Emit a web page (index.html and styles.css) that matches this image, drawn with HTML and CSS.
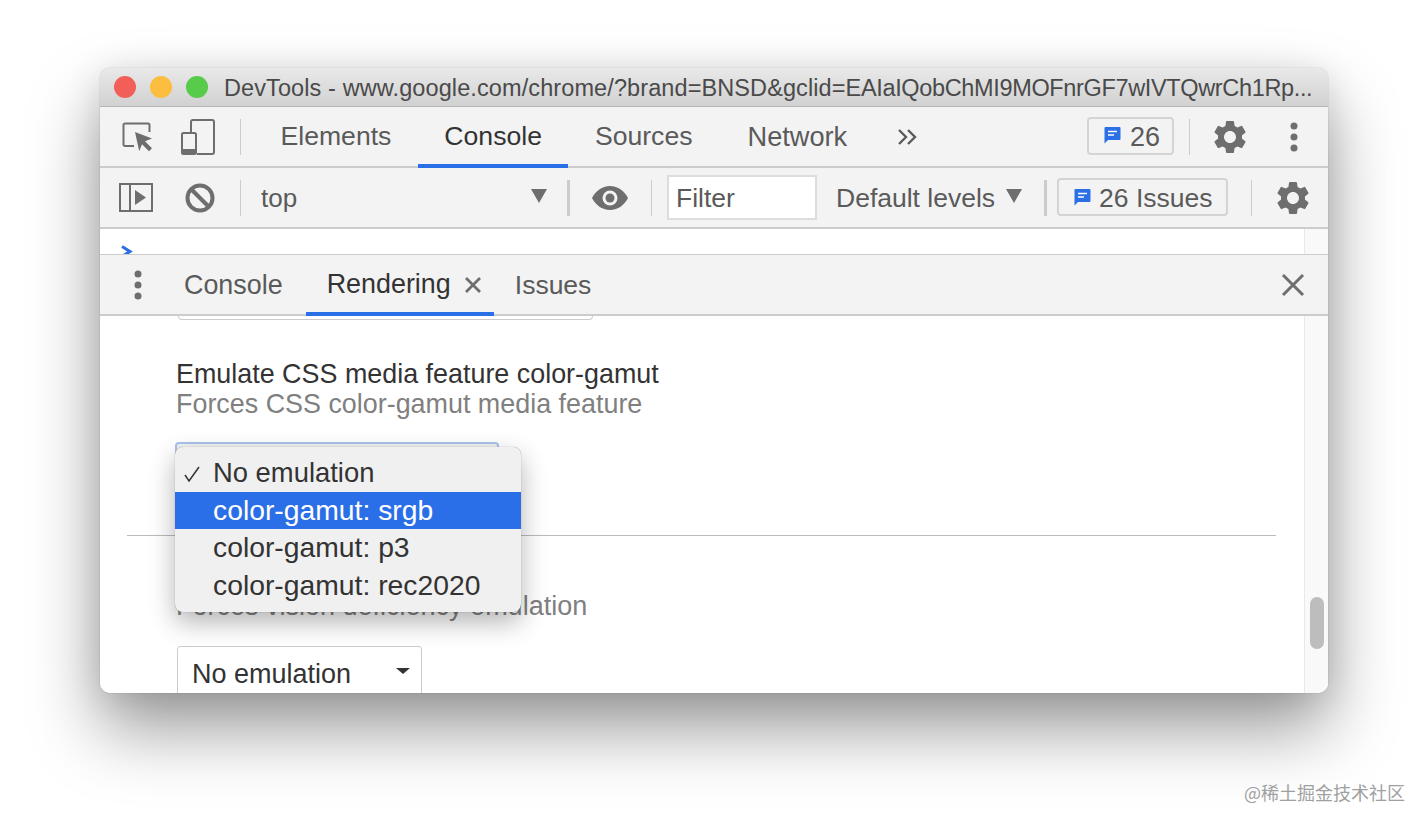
FILE: index.html
```html
<!DOCTYPE html>
<html lang="en">
<head>
    <meta charset="UTF-8">
    <title>DevTools</title>
    <link rel="stylesheet" href="styles.css">
</head>
<body>
    <div class="window">
        <div class="titlebar">
            <span class="light red"></span>
            <span class="light yellow"></span>
            <span class="light green"></span>
            <span class="title">DevTools - www.google.com/chrome/?brand=BNSD&amp;gclid=<span class="title-tail">EAIaIQobChMI9MOFnrGF7wIVTQwrCh1Rp...</span></span>
        </div>

        <div class="toolbar main-tabs">
            <svg class="icon inspect" width="32" height="32" viewBox="0 0 32 32">
                <path d="M12 25H3a1.500 1.500 0 0 1-1.500-1.500V4A1.500 1.500 0 0 1 3 2.500h23A1.500 1.500 0 0 1 27.500 4v7" fill="none" stroke="#6e6e6e" stroke-width="2"/>
                <path d="M13 11l17 6.500-7 2.800 7 7-3 3-7-7-2.800 7z" fill="#6e6e6e"/>
            </svg>
            <svg class="icon device" width="34" height="36" viewBox="0 0 34 36">
                <path d="M10 15V3a2 2 0 0 1 2-2h19a2 2 0 0 1 2 2v30a2 2 0 0 1-2 2H16" fill="none" stroke="#6e6e6e" stroke-width="2"/>
                <rect x="1" y="14" width="14" height="21" rx="1.500" fill="none" stroke="#6e6e6e" stroke-width="2"/>
                <rect x="1" y="30" width="14" height="5" fill="#6e6e6e"/>
            </svg>
            <span class="sep first-sep"></span>
            <a class="tab first-tab">Elements</a>
            <a class="tab active">Console</a>
            <a class="tab">Sources</a>
            <a class="tab network-tab">Network</a>
            <svg class="icon more-tabs" width="22" height="18" viewBox="0 0 22 18">
                <path d="M2 2l7 7-7 7M11 2l7 7-7 7" fill="none" stroke="#5a5a5a" stroke-width="2.400"/>
            </svg>
            <span class="spacer"></span>
            <button class="issues-btn small">
                <svg width="18" height="18" viewBox="0 0 18 18"><path d="M2.500 1h14a1 1 0 0 1 1 1v11a1 1 0 0 1-1 1H5l-3.500 3.500V2a1 1 0 0 1 1-1z" fill="#2a6fe5"/><path d="M5 5.500h9M5 9h6" stroke="#fff" stroke-width="1.600"/></svg>
                26
            </button>
            <span class="sep top-sep"></span>
            <svg class="icon gear-a" width="40" height="40" viewBox="0 0 24 24"><use href="#gear"/></svg>
            <svg class="icon dots-right" width="8" height="32" viewBox="0 0 8 32"><circle cx="4" cy="5" r="3.500"/><circle cx="4" cy="16" r="3.500"/><circle cx="4" cy="27" r="3.500"/></svg>
        </div>

        <div class="toolbar console-bar">
            <svg class="icon dock" width="34" height="30" viewBox="0 0 34 30">
                <rect x="1" y="1" width="32" height="27" fill="none" stroke="#6e6e6e" stroke-width="2"/>
                <path d="M11 1v27" stroke="#6e6e6e" stroke-width="2"/>
                <path d="M16 7l11 7.500-11 7.500z" fill="#6e6e6e"/>
            </svg>
            <svg class="icon clear" width="30" height="30" viewBox="0 0 30 30">
                <circle cx="15" cy="15" r="12.500" fill="none" stroke="#6e6e6e" stroke-width="4"/>
                <path d="M6 6l18 18" stroke="#6e6e6e" stroke-width="4"/>
            </svg>
            <span class="sep clear-sep"></span>
            <span class="context">top</span>
            <span class="arrow context-arrow"></span>
            <span class="sep thick context-sep"></span>
            <svg class="icon eye" width="36" height="24" viewBox="0 0 36 24">
                <path d="M18 0C10 0 3.500 5 0 12c3.500 7 10 12 18 12s14.500-5 18-12C32.500 5 26 0 18 0z" fill="#6e6e6e"/>
                <circle cx="18" cy="12" r="7.500" fill="#f3f3f3"/>
                <circle cx="18" cy="12" r="4.500" fill="#6e6e6e"/>
            </svg>
            <span class="sep eye-sep"></span>
            <div class="filter">Filter</div>
            <span class="levels">Default levels</span>
            <span class="arrow levels-arrow"></span>
            <span class="sep thick levels-sep"></span>
            <button class="issues-btn wide">
                <svg width="18" height="18" viewBox="0 0 18 18"><path d="M2.500 1h14a1 1 0 0 1 1 1v11a1 1 0 0 1-1 1H5l-3.500 3.500V2a1 1 0 0 1 1-1z" fill="#2a6fe5"/><path d="M5 5.500h9M5 9h6" stroke="#fff" stroke-width="1.600"/></svg>
                26 Issues
            </button>
            <span class="sep wide-sep"></span>
            <svg class="icon gear-b" width="40" height="40" viewBox="0 0 24 24"><use href="#gear"/></svg>
        </div>

        <div class="console-area">
            <div class="prompt">
                <svg width="12" height="12" viewBox="0 0 12 12"><path d="M1 1.500l8 5-8 5" fill="none" stroke="#2a6fe5" stroke-width="3"/></svg>
            </div>
            <div class="track"></div>
        </div>

        <div class="toolbar drawer-tabs">
            <svg class="icon dots-left" width="8" height="32" viewBox="0 0 8 32"><circle cx="4" cy="5" r="3.500"/><circle cx="4" cy="16" r="3.500"/><circle cx="4" cy="27" r="3.500"/></svg>
            <a class="dtab console-dtab">Console</a>
            <a class="dtab active">Rendering
                <svg width="18" height="18" viewBox="0 0 18 18"><path d="M2 2l14 14M16 2L2 16" stroke="#6e6e6e" stroke-width="2.800"/></svg>
            </a>
            <a class="dtab issues-dtab">Issues</a>
            <span class="spacer"></span>
            <svg class="icon close-drawer" width="24" height="24" viewBox="0 0 24 24"><path d="M2 2l20 20M22 2L2 22" stroke="#6e6e6e" stroke-width="3"/></svg>
        </div>

        <div class="panel">
            <div class="panel-body">
                <div class="cut-select"></div>
                <h3 class="feature">Emulate CSS media feature color-gamut</h3>
                <p class="hint">Forces CSS color-gamut media feature</p>
                <div class="focus-select"></div>
                <hr class="divider">
                <p class="hint second-hint">Forces vision deficiency emulation</p>
                <div class="plain-select">No emulation<span class="small-arrow"></span></div>
            </div>
            <div class="track"><span class="thumb"></span></div>

            <ul class="popup">
                <li class="checked">
                    <svg width="16" height="16" viewBox="0 0 16 16"><path d="M1 9l4 6 10-14" fill="none" stroke="#333" stroke-width="1.500"/></svg>
                    No emulation
                </li>
                <li class="selected">color-gamut: srgb</li>
                <li>color-gamut: p3</li>
                <li>color-gamut: rec2020</li>
            </ul>
        </div>
    </div>

    <div class="watermark">@稀土掘金技术社区</div>

    <svg width="0" height="0" class="defs">
        <symbol id="gear" viewBox="0 0 24 24">
            <path fill="#6e6e6e" d="M19.140 12.940c.04-.3.06-.61.06-.94 0-.32-.02-.64-.07-.94l2.030-1.580c.18-.14.23-.41.12-.61l-1.920-3.320c-.12-.22-.37-.29-.59-.22l-2.390.96c-.5-.38-1.030-.7-1.620-.94l-.36-2.540c-.04-.24-.24-.41-.48-.41h-3.840c-.24 0-.43.17-.47.41l-.36 2.540c-.59.24-1.130.57-1.620.94l-2.390-.96c-.22-.08-.47 0-.59.22L2.740 8.870c-.12.21-.08.47.12.61l2.030 1.580c-.05.3-.09.63-.09.94s.02.64.07.94l-2.030 1.580c-.18.14-.23.41-.12.61l1.920 3.320c.12.22.37.29.59.22l2.390-.96c.5.38 1.030.7 1.620.94l.36 2.540c.05.24.24.41.48.41h3.840c.24 0 .44-.17.47-.41l.36-2.540c.59-.24 1.130-.56 1.620-.94l2.390.96c.22.08.47 0 .59-.22l1.920-3.320c.12-.22.07-.47-.12-.61l-2.010-1.580zM12 15.600c-1.980 0-3.600-1.620-3.600-3.600s1.620-3.600 3.600-3.600 3.600 1.620 3.600 3.600-1.620 3.600-3.600 3.600z"/>
        </symbol>
    </svg>
</body>
</html>
```

FILE: styles.css
```css
* {
    margin: 0;
    padding: 0;
    box-sizing: border-box;
}
html, body {
    height: 826px;
    overflow: hidden;
}
body {
    font-family: "Liberation Sans", Arial, sans-serif;
    background-color: #fff;
    color: #5a5a5a;
    position: relative;
}
.defs {
    position: absolute;
}
.window {
    width: 1228px;
    height: 625px;
    margin: 68px 0 0 100px;
    border-radius: 10px;
    overflow: hidden;
    background-color: #fff;
    display: flex;
    flex-direction: column;
    box-shadow: 0 0 1px rgba(0, 0, 0, 0.45), 0 36px 70px rgba(0, 0, 0, 0.4), 0 4px 34px rgba(0, 0, 0, 0.1);
}
.titlebar {
    height: 39px;
    flex: none;
    display: flex;
    align-items: center;
    padding-left: 14px;
    background: linear-gradient(#e9e9e9, #d1d1d1);
    border-bottom: 1px solid #b5b5b5;
}
.light {
    width: 22px;
    height: 22px;
    border-radius: 50%;
    margin-right: 14px;
    flex: none;
}
.light.red { background-color: #f25f58; }
.light.yellow { background-color: #fbbe3f; }
.light.green { background-color: #58cb4b; }
.title {
    font-size: 23.500px;
    letter-spacing: 0.1px;
    color: #4a4a4a;
    margin-left: 2px;
    padding-top: 3px;
    white-space: nowrap;
}
.title-tail {
    letter-spacing: -0.35px;
}
.toolbar {
    flex: none;
    display: flex;
    align-items: center;
    background-color: #f3f3f3;
    border-bottom: 2px solid #ccc;
}
.main-tabs {
    height: 61px;
}
.console-bar {
    height: 61px;
}
.drawer-tabs {
    height: 62px;
    border-top: 1px solid #ccc;
}
.icon {
    flex: none;
    fill: #6e6e6e;
}
.spacer {
    flex: 1;
}
.sep {
    width: 1px;
    height: 36px;
    background-color: #ccc;
    flex: none;
}
.sep.thick {
    width: 3px;
}
.inspect { margin-left: 22px; }
.device { margin-left: 27px; }
.first-sep { margin-left: 25px; }
.tab {
    align-self: stretch;
    padding: 2px 26.500px 0;
    display: flex;
    align-items: center;
    font-size: 26.600px;
    border-bottom: 4px solid transparent;
    margin-bottom: -2px;
}
.first-tab { margin-left: 13px; }
.tab.active {
    color: #333;
    border-bottom-color: #2a6fe5;
}
.network-tab {
    margin-left: 2px;
    font-size: 27.200px;
}
.more-tabs { margin-left: 23px; }
.issues-btn {
    display: flex;
    align-items: center;
    gap: 8px;
    font-family: inherit;
    font-size: 26.500px;
    color: #5a5a5a;
    background-color: #f3f3f3;
    border: 2px solid #d4d4d4;
    border-radius: 4px;
    margin-bottom: 2px;
    flex: none;
}
.issues-btn.small {
    width: 87px;
    height: 38px;
    padding: 3px 0 0 14px;
    gap: 9px;
    font-size: 27px;
}
.issues-btn.wide {
    width: 171px;
    height: 38px;
    margin-left: 10px;
    padding: 4px 0 0 14px;
}
.issues-btn svg {
    margin-bottom: 4px;
}
.top-sep { margin-left: 15px; }
.gear-a { margin-left: 20px; }
.dots-right {
    margin-left: 40px;
    margin-right: 30px;
}
.dock { margin-left: 19px; }
.clear { margin-left: 32px; }
.clear-sep { margin-left: 25px; }
.context {
    font-size: 26px;
    margin-left: 20px;
    padding-top: 2px;
    width: 270px;
}
.arrow {
    width: 0;
    height: 0;
    border-left: 8px solid transparent;
    border-right: 8px solid transparent;
    border-top: 14px solid #6e6e6e;
    flex: none;
    margin-bottom: 4px;
}
.context-sep { margin-left: 20px; }
.eye { margin-left: 22px; }
.eye-sep { margin-left: 23px; }
.filter {
    width: 150px;
    height: 45px;
    margin-left: 15px;
    padding: 2px 0 0 7px;
    display: flex;
    align-items: center;
    font-size: 26.500px;
    background-color: #fff;
    border: 2px solid #ddd;
}
.levels {
    font-size: 26.500px;
    margin-left: 19px;
    padding-top: 2px;
}
.levels-arrow { margin-left: 11px; }
.levels-sep { margin-left: 22px; }
.wide-sep { margin-left: 23px; }
.gear-b { margin-left: 21px; }
.console-area {
    height: 25px;
    flex: none;
    display: flex;
    background-color: #fff;
    overflow: hidden;
}
.prompt {
    flex: 1;
    padding: 14px 0 0 21px;
}
.track {
    width: 24px;
    flex: none;
    background-color: #f9f9f9;
    border-left: 1px solid #e8e8e8;
    position: relative;
}
.dots-left { margin-left: 34px; }
.dtab {
    align-self: stretch;
    display: flex;
    align-items: center;
    padding-top: 2px;
    font-size: 26.900px;
}
.console-dtab { margin-left: 42px; }
.dtab.active {
    color: #333;
    margin-left: 23px;
    padding: 2px 12px 0 21px;
    gap: 13px;
    border-bottom: 4px solid #2a6fe5;
    margin-bottom: -2px;
}
.issues-dtab {
    margin-left: 21px;
    font-size: 26.500px;
}
.close-drawer { margin-right: 23px; }
.panel {
    flex: 1;
    display: flex;
    position: relative;
    overflow: hidden;
    background-color: #fff;
}
.panel-body {
    flex: 1;
    padding: 0 28px 0 27px;
    overflow: hidden;
}
.cut-select {
    width: 415px;
    height: 4px;
    margin-left: 51px;
    border: 1px solid #ccc;
    border-top: none;
    border-radius: 0 0 4px 4px;
}
.feature {
    font-size: 26.900px;
    font-weight: normal;
    line-height: 30px;
    color: #333;
    margin: 39px 0 0 49px;
}
.hint {
    font-size: 26.900px;
    line-height: 30px;
    color: #808080;
    margin-left: 49px;
}
.second-hint {
    margin-top: 55px;
    font-size: 27px;
}
.focus-select {
    width: 324px;
    height: 56px;
    margin: 23px 0 37px 48px;
    background-color: #f3f3f3;
    border: 2px solid #a8c3ec;
    border-radius: 4px;
}
.divider {
    border: none;
    height: 1px;
    background-color: #bbb;
}
.plain-select {
    width: 245px;
    height: 60px;
    margin: 25px 0 0 50px;
    padding: 12px 0 0 14px;
    font-size: 27px;
    color: #333;
    border: 1px solid #ccc;
    border-radius: 3px;
    display: flex;
    justify-content: space-between;
}
.small-arrow {
    width: 0;
    height: 0;
    margin: 9px 11px 0 0;
    border-left: 7px solid transparent;
    border-right: 7px solid transparent;
    border-top: 6px solid #333;
}
.thumb {
    position: absolute;
    left: 5px;
    top: 281px;
    width: 14px;
    height: 52px;
    border-radius: 7px;
    background-color: #bdbdbd;
}
.popup {
    position: absolute;
    left: 75px;
    top: 131px;
    width: 346px;
    height: 165px;
    padding-top: 7px;
    list-style: none;
    font-size: 28.300px;
    color: #333;
    background-color: #f0f0f0;
    border-radius: 8px;
    box-shadow: 0 0 1px rgba(0, 0, 0, 0.45), 0 10px 26px rgba(0, 0, 0, 0.3);
}
.popup li {
    height: 37.500px;
    padding-left: 38px;
    display: flex;
    align-items: center;
    position: relative;
}
.popup li.checked {
    font-size: 27.400px;
}
.popup li svg {
    position: absolute;
    left: 9px;
    top: 12px;
}
.popup li.selected {
    background-color: #2b6fe8;
    color: #fff;
}
.watermark {
    position: absolute;
    left: 1244px;
    top: 781px;
    font-family: "Noto Sans CJK SC", "Liberation Sans", sans-serif;
    font-size: 18px;
    line-height: 22px;
    color: #a0a0a0;
    white-space: nowrap;
}
```
